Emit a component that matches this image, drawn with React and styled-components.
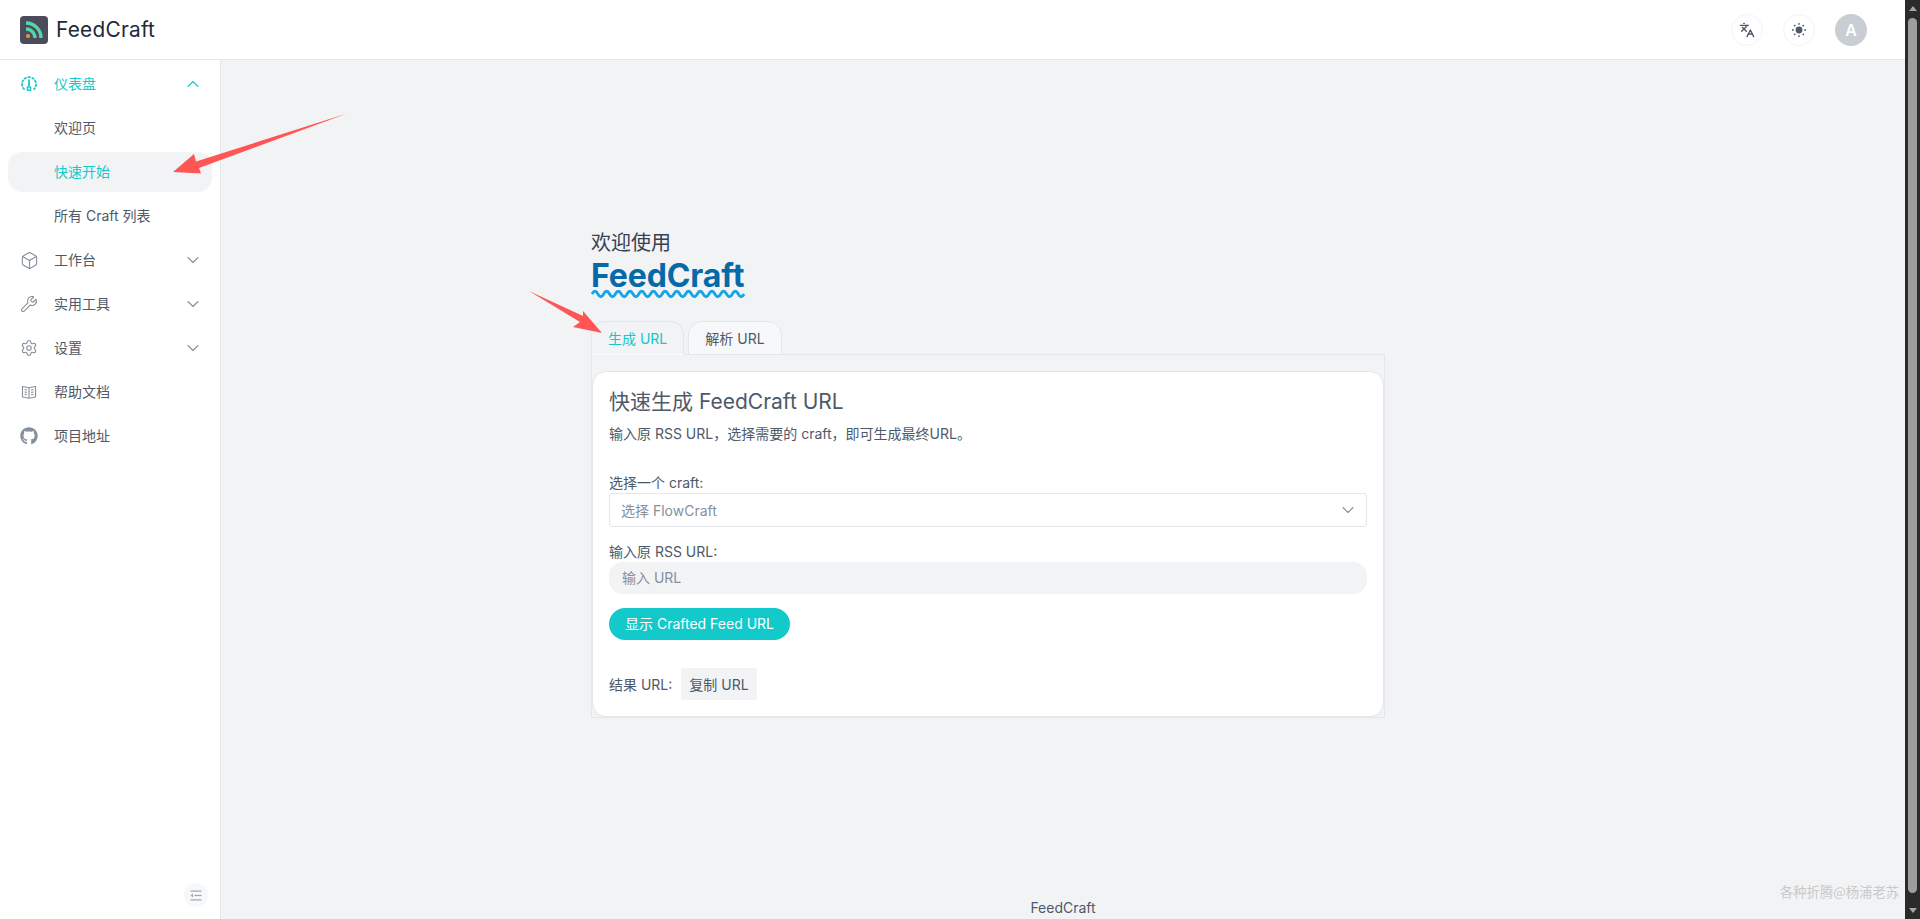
import React from "react";
import styled, { createGlobalStyle } from "styled-components";
import { ChevronDown, ChevronUp, Box, Wrench, Settings, Languages } from "lucide-react";
import { FaGithub } from "react-icons/fa";

const Global = createGlobalStyle`
  html, body { margin: 0; padding: 0; height: 100%; overflow: hidden; }
  body { font-family: Inter, "Noto Sans CJK SC", sans-serif; color: #4b5563; background: #f2f3f5; }
  #root { height: 100%; }
  * { box-sizing: border-box; }
`;

const Shell = styled.div`
  display: flex; width: 1920px; height: 919px; position: relative; overflow: hidden;
`;
const Page = styled.div`
  flex: 1; min-width: 0; display: flex; flex-direction: column;
`;
const Header = styled.header`
  height: 60px; flex: none; background: #fff; border-bottom: 1px solid #e5e6e9;
  display: flex; align-items: center; justify-content: space-between; padding: 0 38px 0 20px;
`;
const Brand = styled.div`
  display: flex; align-items: center; gap: 8px; font-size: 20.8px; color: #1f2937; font-weight: 400; letter-spacing: 0.25px;
`;
const HeaderActions = styled.div`
  display: flex; align-items: center; gap: 20px;
`;
const RoundButton = styled.button`
  width: 32px; height: 32px; border-radius: 50%; border: 1px solid #f2f3f5; background: #fff; color: #4e5969;
  display: flex; align-items: center; justify-content: center; padding: 0;
`;
const Avatar = styled.div`
  width: 32px; height: 32px; border-radius: 50%; background: #c9cdd4; color: #fff;
  display: flex; align-items: center; justify-content: center; font-size: 16px; font-weight: 600;
`;
const Body = styled.div`
  flex: 1; display: flex; min-height: 0;
`;
const Sidebar = styled.aside`
  width: 221px; flex: none; background: #fff; border-right: 1px solid #e5e6e9; padding: 4px 8px 0;
  display: flex; flex-direction: column; gap: 4px; position: relative;
`;
const NavItem = styled.div`
  height: 40px; display: flex; align-items: center; border-radius: 14px; font-size: 14px;
  padding: 0 12px 0 ${(p) => (p.$sub ? "46px" : "11px")};
  color: ${(p) => (p.$active ? "#14c9c9" : "#4e5969")};
  background: ${(p) => (p.$selected ? "#f2f3f5" : "transparent")};
`;
const NavIcon = styled.span`
  width: 20px; margin-right: 15px; display: flex; align-items: center; justify-content: center;
  color: ${(p) => (p.$active ? "#14c9c9" : "#86909c")};
`;
const NavLabel = styled.span`
  flex: 1; padding-bottom: 2px;
`;
const NavChevron = styled.span`
  display: flex; align-items: center; margin-right: -3px; color: ${(p) => (p.$active ? "#14c9c9" : "#86909c")};
`;
const Collapse = styled.button`
  position: absolute; right: 12px; bottom: 12px; width: 24px; height: 24px; border-radius: 50%; border: none;
  background: #f7f8fa; color: #a0a6b0; display: flex; align-items: center; justify-content: center; padding: 0;
`;
const Main = styled.main`
  flex: 1; min-width: 0; display: flex; flex-direction: column; background: #f2f3f5;
`;
const Content = styled.div`
  flex: 1; padding: 169px 0 0 370px;
`;
const Column = styled.div`
  width: 794px;
`;
const Welcome = styled.div`
  font-size: 20px; line-height: 28px; color: #374151; height: 29px;
`;
const Title = styled.div`
  font-size: 32px; line-height: 36px; font-weight: 700; color: #0669a8; height: 36px; letter-spacing: -0.1px;
`;
const Wave = styled.svg`
  display: block; width: 155px; height: 10px; margin-top: -5px;
`;
const Tabs = styled.div`
  display: flex; gap: 4px; margin-top: 22px; height: 34px; position: relative; z-index: 1;
`;
const Tab = styled.div`
  height: 34px; white-space: nowrap; border: 1px solid #e5e6eb; border-radius: 14px 14px 0 0; font-size: 14px; display: flex; align-items: center;
  padding: 0 16px; background: ${(p) => (p.$active ? "#f2f3f5" : "#f7f8fa")};
  color: ${(p) => (p.$active ? "#14c9c9" : "#4e5969")};
  border-bottom-color: ${(p) => (p.$active ? "#fbfcfd" : "#e5e6eb")};
`;
const TabPanel = styled.div`
  border: 1px solid #e5e6eb; margin-top: -1px; padding: 16px 0 0; height: 364px;
`;
const Card = styled.div`
  background: #fff; border: 1px solid #e5e6eb; border-radius: 14px; padding: 16px 16px 15px; height: 346px;
`;
const CardTitle = styled.h2`
  margin: 0; font-size: 21px; line-height: 28px; font-weight: 400; color: #4e5969;
`;
const CardSub = styled.p`
  margin: 8px 0 0; font-size: 14px; line-height: 20px; color: #4e5969;
`;
const Label = styled.div`
  font-size: 14px; line-height: 16px; color: #4e5969; margin-top: ${(p) => p.$top}px;
`;
const Select = styled.div`
  height: 34px; border: 1px solid #e5e6eb; border-radius: 3px; display: flex; align-items: center; justify-content: space-between;
  padding: 0 8px 0 11px; font-size: 14px; color: #86909c; margin-top: 2px;
`;
const Input = styled.div`
  height: 32px; background: #f2f3f5; border-radius: 14px; display: flex; align-items: center; padding: 0 13px 2px;
  font-size: 14px; color: #86909c; margin-top: 2px;
`;
const Primary = styled.button`
  display: block; height: 32px; margin-top: 14px; padding: 0 16px 2px; border: none; border-radius: 16px; background: #14c9c9; color: #fff;
  font: inherit; font-size: 14px; white-space: nowrap;
`;
const ResultRow = styled.div`
  display: flex; align-items: center; gap: 9px; margin-top: 28px; font-size: 14px; color: #4e5969;
`;
const CopyButton = styled.button`
  height: 32px; padding: 0 8px; border: none; border-radius: 3px; background: #f2f3f5; color: #4e5969; font: inherit; font-size: 14px;
`;
const Footer = styled.footer`
  height: 21px; flex: none; text-align: center; font-size: 14px; line-height: 20px; color: #4e5969;
`;
const Scrollbar = styled.div`
  width: 15px; flex: none; background: #2b2b2b; display: flex; flex-direction: column; align-items: center; justify-content: space-between;
  position: relative;
`;
const ScrollThumb = styled.div`
  position: absolute; top: 18px; left: 3px; width: 9px; height: 875px; border-radius: 5px; background: #9e9e9e;
`;
const ScrollArrow = styled.div`
  width: 0; height: 0; border-left: 4px solid transparent; border-right: 4px solid transparent; margin: 6px 0;
  ${(p) => (p.$up ? "border-bottom: 5px solid #a5a5a5;" : "border-top: 5px solid #a5a5a5;")}
`;
const Watermark = styled.div`
  position: absolute; right: 21px; bottom: 18px; font-size: 13.3px; line-height: 18px; color: #c9c9c9; font-family: "Noto Sans CJK SC", sans-serif; white-space: nowrap;
`;
const Arrows = styled.svg`
  position: absolute; left: 0; top: 0; width: 1920px; height: 919px; pointer-events: none; z-index: 5;
`;

const Logo = () => (
  <svg width="28" height="28" viewBox="0 0 28 28">
    <rect width="28" height="28" rx="4" fill="#4b4b5c" />
    <path d="M6 13a9 9 0 0 1 9 9" fill="none" stroke="#4fd8a8" strokeWidth="3.4" />
    <path d="M6 7a15 15 0 0 1 15 15" fill="none" stroke="#4fd8a8" strokeWidth="3.4" />
    <circle cx="8" cy="20" r="2" fill="#e79a2d" />
  </svg>
);

const DashIcon = () => (
  <svg width="16" height="16" viewBox="0 0 16 16" fill="none" stroke="currentColor">
    <path d="M3.6 13.6A7 7 0 1 1 12.4 13.6" strokeWidth="1.8" strokeDasharray="2.9 1" />
    <path d="M8 3.5V10.5" strokeWidth="1.8" />
    <rect x="6.4" y="11" width="3.2" height="3.2" strokeWidth="1.4" />
  </svg>
);

const BookIcon = () => (
  <svg width="16" height="16" viewBox="0 0 16 16" fill="none" stroke="currentColor" strokeWidth="1.1" strokeLinejoin="round">
    <path d="M1.5 2.5 8 3.8 14.5 2.5V13L8 14.3 1.5 13Z" />
    <path d="M8 3.8V14.3M3.6 5.5 5.9 6M3.6 8 5.9 8.4M3.6 10.4 5.9 10.8M12.4 5.5 10.1 6M12.4 8 10.1 8.4M12.4 10.4 10.1 10.8" />
  </svg>
);

const SunIcon = () => (
  <svg width="14" height="14" viewBox="0 0 14 14" fill="currentColor">
    <circle cx="7" cy="7" r="3.4" />
    {[[7, 0.9], [7, 13.1], [0.9, 7], [13.1, 7], [2.7, 2.7], [11.3, 2.7], [2.7, 11.3], [11.3, 11.3]].map(([x, y]) => (
      <circle key={`${x}-${y}`} cx={x} cy={y} r="0.9" />
    ))}
  </svg>
);

const FoldIcon = () => (
  <svg width="12" height="11" viewBox="0 0 12 11" fill="currentColor">
    <rect x="0.5" y="0.5" width="11" height="1.2" />
    <rect x="0.5" y="9.3" width="11" height="1.2" />
    <rect x="4.5" y="4.9" width="7" height="1.2" />
    <path d="M0.5 5.5 3 3.6V7.4Z" />
  </svg>
);

const wavePath = (() => {
  let d = "M1 5";
  for (let i = 0; i < 13; i += 1) d += " q2.9 -5.5 5.85 0 t5.85 0";
  return d;
})();

const chevron = { size: 20, strokeWidth: 1.3 };

const items = [
  { label: "工作台", icon: <Box size={19} strokeWidth={1.4} />, chevron: true },
  { label: "实用工具", icon: <Wrench size={18} strokeWidth={1.5} />, chevron: true },
  { label: "设置", icon: <Settings size={18} strokeWidth={1.5} />, chevron: true },
  { label: "帮助文档", icon: <BookIcon /> },
  { label: "项目地址", icon: <FaGithub size={18} /> },
];

export default function App() {
  return (
    <Shell>
      <Global />
      <Page>
        <Header>
          <Brand><Logo />FeedCraft</Brand>
          <HeaderActions>
            <RoundButton><Languages size={16} strokeWidth={2} /></RoundButton>
            <RoundButton><SunIcon /></RoundButton>
            <Avatar>A</Avatar>
          </HeaderActions>
        </Header>
        <Body>
          <Sidebar>
            <NavItem $active>
              <NavIcon $active><DashIcon /></NavIcon>
              <NavLabel>仪表盘</NavLabel>
              <NavChevron $active><ChevronUp {...chevron} /></NavChevron>
            </NavItem>
            <NavItem $sub><NavLabel>欢迎页</NavLabel></NavItem>
            <NavItem $sub $active $selected><NavLabel>快速开始</NavLabel></NavItem>
            <NavItem $sub><NavLabel>所有 Craft 列表</NavLabel></NavItem>
            {items.map((it) => (
              <NavItem key={it.label}>
                <NavIcon>{it.icon}</NavIcon>
                <NavLabel>{it.label}</NavLabel>
                {it.chevron && <NavChevron><ChevronDown {...chevron} /></NavChevron>}
              </NavItem>
            ))}
            <Collapse><FoldIcon /></Collapse>
          </Sidebar>
          <Main>
            <Content>
              <Column>
                <Welcome>欢迎使用</Welcome>
                <Title>FeedCraft</Title>
                <Wave viewBox="0 0 155 10"><path d={wavePath} fill="none" stroke="#14a5e6" strokeWidth="2.8" /></Wave>
                <Tabs>
                  <Tab $active>生成 URL</Tab>
                  <Tab>解析 URL</Tab>
                </Tabs>
                <TabPanel>
                  <Card>
                    <CardTitle>快速生成 FeedCraft URL</CardTitle>
                    <CardSub>输入原 RSS URL，选择需要的 craft，即可生成最终URL。</CardSub>
                    <Label $top={31}>选择一个 craft:</Label>
                    <Select>选择 FlowCraft<ChevronDown size={20} strokeWidth={1.3} /></Select>
                    <Label $top={17}>输入原 RSS URL:</Label>
                    <Input>输入 URL</Input>
                    <Primary>显示 Crafted Feed URL</Primary>
                    <ResultRow>结果 URL:<CopyButton>复制 URL</CopyButton></ResultRow>
                  </Card>
                </TabPanel>
              </Column>
            </Content>
            <Footer>FeedCraft</Footer>
          </Main>
        </Body>
      </Page>
      <Scrollbar>
        <ScrollArrow $up />
        <ScrollThumb />
        <ScrollArrow />
      </Scrollbar>
      <Watermark>各种折腾@杨浦老苏</Watermark>
      <Arrows viewBox="0 0 1920 919">
        <path d="M347 113.5L196 161.5L194 154L173 172L201 173.5L199 168Z" fill="#ff5555" />
        <path d="M529 291L583 316L583 311L602 333L573 327L580 322Z" fill="#ff5555" />
      </Arrows>
    </Shell>
  );
}
